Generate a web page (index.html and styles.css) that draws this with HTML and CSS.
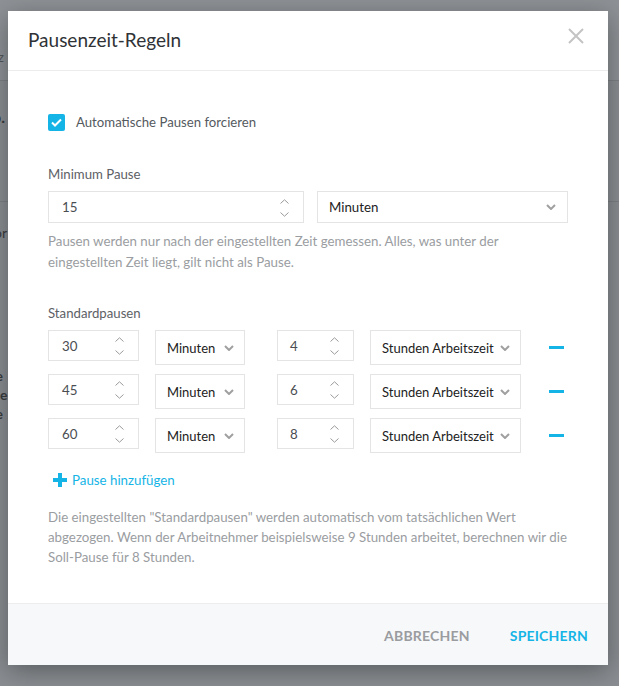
FILE: index.html
```html
<!DOCTYPE html>
<html lang="de">

<head>
  <meta charset="UTF-8" />
  <meta name="viewport" content="width=device-width, initial-scale=1.0" />
  <title>Pausenzeit-Regeln</title>
  <link rel="stylesheet" href="styles.css">
</head>

<body>
  <div class="page">
    <div class="page-top"><span class="page-frag frag-top">z</span></div>
    <div class="page-band">
      <span class="page-frag frag-bold">o.</span>
    </div>
    <div class="page-rest">
      <span class="page-frag frag-or">or</span>
      <div class="frag-list">
        <span class="page-frag frag-bold">le</span>
        <span class="page-frag frag-bold">de</span>
        <span class="page-frag frag-bold">le</span>
      </div>
    </div>
  </div>

  <div class="modal">
    <div class="modal-header">
      <h2>Pausenzeit-Regeln</h2>
      <svg class="close" width="16" height="16" viewBox="0 0 16 16">
        <path d="M1 1 L15 15 M15 1 L1 15" stroke="#c4c4c4" stroke-width="2" fill="none" />
      </svg>
    </div>

    <div class="modal-body">
      <label class="check">
        <span class="box">
          <svg width="11" height="9" viewBox="0 0 11 9">
            <path d="M1 4.5 L4 7.5 L10 1.5" stroke="#fff" stroke-width="2" fill="none" />
          </svg>
        </span>
        Automatische Pausen forcieren
      </label>

      <div class="field-label">Minimum Pause</div>
      <div class="min-row">
        <div class="num wide">
          <span>15</span>
          <span class="stepper">
            <svg width="9" height="5" viewBox="0 0 9 5"><path d="M0.5 4.5 L4.5 0.8 L8.5 4.5" stroke="#9a9a9a" fill="none" /></svg>
            <svg width="9" height="5" viewBox="0 0 9 5"><path d="M0.5 0.5 L4.5 4.2 L8.5 0.5" stroke="#9a9a9a" fill="none" /></svg>
          </span>
        </div>
        <div class="sel wide">
          <span>Minuten</span>
          <svg class="caret" width="10" height="6" viewBox="0 0 10 6"><path d="M1 1 L5 5 L9 1" stroke="#a0a0a0" stroke-width="2" fill="none" /></svg>
        </div>
      </div>
      <p class="help">Pausen werden nur nach der eingestellten Zeit gemessen. Alles, was unter der eingestellten Zeit liegt, gilt nicht als Pause.</p>

      <div class="field-label std">Standardpausen</div>
      <div class="rows">
        <div class="break-row">
          <div class="num n1"><span>30</span><span class="stepper"><svg width="9" height="5" viewBox="0 0 9 5"><path d="M0.5 4.5 L4.5 0.8 L8.5 4.5" stroke="#9a9a9a" fill="none" /></svg><svg width="9" height="5" viewBox="0 0 9 5"><path d="M0.5 0.5 L4.5 4.2 L8.5 0.5" stroke="#9a9a9a" fill="none" /></svg></span></div>
          <div class="sel s1"><span>Minuten</span><svg class="caret" width="10" height="6" viewBox="0 0 10 6"><path d="M1 1 L5 5 L9 1" stroke="#a0a0a0" stroke-width="2" fill="none" /></svg></div>
          <div class="num n2"><span>4</span><span class="stepper"><svg width="9" height="5" viewBox="0 0 9 5"><path d="M0.5 4.5 L4.5 0.8 L8.5 4.5" stroke="#9a9a9a" fill="none" /></svg><svg width="9" height="5" viewBox="0 0 9 5"><path d="M0.5 0.5 L4.5 4.2 L8.5 0.5" stroke="#9a9a9a" fill="none" /></svg></span></div>
          <div class="sel s2"><span>Stunden Arbeitszeit</span><svg class="caret" width="10" height="6" viewBox="0 0 10 6"><path d="M1 1 L5 5 L9 1" stroke="#a0a0a0" stroke-width="2" fill="none" /></svg></div>
          <span class="minus"></span>
        </div>
        <div class="break-row">
          <div class="num n1"><span>45</span><span class="stepper"><svg width="9" height="5" viewBox="0 0 9 5"><path d="M0.5 4.5 L4.5 0.8 L8.5 4.5" stroke="#9a9a9a" fill="none" /></svg><svg width="9" height="5" viewBox="0 0 9 5"><path d="M0.5 0.5 L4.5 4.2 L8.5 0.5" stroke="#9a9a9a" fill="none" /></svg></span></div>
          <div class="sel s1"><span>Minuten</span><svg class="caret" width="10" height="6" viewBox="0 0 10 6"><path d="M1 1 L5 5 L9 1" stroke="#a0a0a0" stroke-width="2" fill="none" /></svg></div>
          <div class="num n2"><span>6</span><span class="stepper"><svg width="9" height="5" viewBox="0 0 9 5"><path d="M0.5 4.5 L4.5 0.8 L8.5 4.5" stroke="#9a9a9a" fill="none" /></svg><svg width="9" height="5" viewBox="0 0 9 5"><path d="M0.5 0.5 L4.5 4.2 L8.5 0.5" stroke="#9a9a9a" fill="none" /></svg></span></div>
          <div class="sel s2"><span>Stunden Arbeitszeit</span><svg class="caret" width="10" height="6" viewBox="0 0 10 6"><path d="M1 1 L5 5 L9 1" stroke="#a0a0a0" stroke-width="2" fill="none" /></svg></div>
          <span class="minus"></span>
        </div>
        <div class="break-row">
          <div class="num n1"><span>60</span><span class="stepper"><svg width="9" height="5" viewBox="0 0 9 5"><path d="M0.5 4.5 L4.5 0.8 L8.5 4.5" stroke="#9a9a9a" fill="none" /></svg><svg width="9" height="5" viewBox="0 0 9 5"><path d="M0.5 0.5 L4.5 4.2 L8.5 0.5" stroke="#9a9a9a" fill="none" /></svg></span></div>
          <div class="sel s1"><span>Minuten</span><svg class="caret" width="10" height="6" viewBox="0 0 10 6"><path d="M1 1 L5 5 L9 1" stroke="#a0a0a0" stroke-width="2" fill="none" /></svg></div>
          <div class="num n2"><span>8</span><span class="stepper"><svg width="9" height="5" viewBox="0 0 9 5"><path d="M0.5 4.5 L4.5 0.8 L8.5 4.5" stroke="#9a9a9a" fill="none" /></svg><svg width="9" height="5" viewBox="0 0 9 5"><path d="M0.5 0.5 L4.5 4.2 L8.5 0.5" stroke="#9a9a9a" fill="none" /></svg></span></div>
          <div class="sel s2"><span>Stunden Arbeitszeit</span><svg class="caret" width="10" height="6" viewBox="0 0 10 6"><path d="M1 1 L5 5 L9 1" stroke="#a0a0a0" stroke-width="2" fill="none" /></svg></div>
          <span class="minus"></span>
        </div>
      </div>

      <a class="add" href="#">
        <svg width="14" height="14" viewBox="0 0 14 14"><path d="M7 0 V14 M0 7 H14" stroke="#14b4e6" stroke-width="4" /></svg>
        Pause hinzufügen
      </a>

      <p class="help desc">Die eingestellten "Standardpausen" werden automatisch vom tatsächlichen Wert abgezogen. Wenn der Arbeitnehmer beispielsweise 9 Stunden arbeitet, berechnen wir die Soll-Pause für 8 Stunden.</p>
    </div>

    <div class="modal-footer">
      <button class="btn cancel">ABBRECHEN</button>
      <button class="btn save">SPEICHERN</button>
    </div>
  </div>
</body>

</html>
```

FILE: styles.css
```css
* {
  box-sizing: border-box;
  margin: 0;
  padding: 0;
  font-family: 'Lato', 'Liberation Sans', sans-serif;
}

body {
  background: #8a8e92;
  min-height: 686px;
  overflow: hidden;
}

/* dimmed page behind the dialog */
.page {
  height: 686px;
}

.page-top {
  height: 81px;
  background: #8e9296;
  border-bottom: 1px solid #7d8185;
  padding-top: 49px;
}

.page-band {
  height: 121px;
  border-bottom: 1px solid #7d8185;
  padding-top: 26px;
}

.page-rest {
  padding-top: 22px;
}

.page-frag {
  display: block;
  color: #3a3d40;
  font-size: 14px;
  margin-left: -6px;
}

.frag-top {
  color: #55595c;
  font-size: 13px;
  margin-left: -2px;
}

.frag-bold {
  font-weight: 700;
  font-size: 16px;
  margin-left: -8px;
}

.frag-list {
  margin-top: 125px;
  line-height: 19px;
}

.frag-list .page-frag {
  font-size: 14px;
}

/* dialog */
.modal {
  position: absolute;
  left: 8px;
  top: 11px;
  width: 600px;
  background: #fff;
  box-shadow: 0 6px 24px rgba(0, 0, 0, 0.35);
}

.modal-header {
  height: 60px;
  border-bottom: 1px solid #ececec;
  display: flex;
  align-items: center;
  justify-content: space-between;
  padding: 0 24px 0 20px;
}

.modal-header h2 {
  font-size: 19px;
  font-weight: 400;
  color: #2f3236;
  margin-top: -2px;
}

.close {
  margin-top: -10px;
}

.modal-body {
  padding: 42px 40px 36px;
}

.check {
  display: flex;
  align-items: center;
  gap: 11px;
  font-size: 13.2px;
  color: #555a5f;
  height: 18px;
}

.box {
  width: 17px;
  height: 17px;
  border-radius: 2px;
  background: #14b4e6;
  display: flex;
  align-items: center;
  justify-content: center;
}

.field-label {
  margin-top: 33px;
  font-size: 13.2px;
  line-height: 20px;
  color: #5d6166;
}

.min-row {
  display: flex;
  gap: 13px;
  margin-top: 7px;
}

.num,
.sel {
  border: 1px solid #e4e4e4;
  display: flex;
  align-items: center;
  justify-content: space-between;
  font-size: 13.3px;
  white-space: nowrap;
}

.num {
  color: #4a4d52;
  height: 31px;
  padding: 0 14px 0 13px;
}

.sel {
  color: #222;
  height: 35px;
  padding: 0 10px 0 11px;
}

.num.wide,
.sel.wide {
  height: 32px;
}

.num.wide {
  width: 256px;
}

.sel.wide {
  width: 251px;
  padding-right: 11px;
}

.stepper {
  display: flex;
  flex-direction: column;
  gap: 8px;
  margin-top: 1px;
}

.help {
  margin-top: 8px;
  font-size: 13.3px;
  line-height: 21px;
  color: #9a9da1;
}

.field-label.std {
  margin-top: 30px;
}

.rows {
  margin-top: 7px;
  display: flex;
  flex-direction: column;
  gap: 9px;
}

.break-row {
  display: flex;
  align-items: flex-start;
}

.n1 {
  width: 91px;
}

.s1 {
  width: 90px;
  margin-left: 16px;
  font-size: 13px;
}

.n2 {
  width: 77px;
  margin-left: 32px;
  padding-left: 12px;
}

.s2 {
  width: 151px;
  margin-left: 16px;
  padding-right: 10px;
  font-size: 13px;
}

.minus {
  width: 15px;
  height: 3px;
  background: #14b4e6;
  margin: 16px 0 0 28px;
}

.add {
  display: flex;
  align-items: center;
  gap: 5px;
  margin: 17px 0 0 5px;
  font-size: 13.3px;
  color: #14b4e6;
  text-decoration: none;
  height: 20px;
}

.desc {
  margin-top: 17px;
  line-height: 20px;
}

.modal-footer {
  height: 62px;
  background: #f7f8fa;
  border-top: 1px solid #ededed;
  display: flex;
  justify-content: flex-end;
  align-items: center;
  gap: 40px;
  padding: 2px 20px 0 0;
}

.btn {
  background: none;
  border: none;
  font-size: 14px;
  font-weight: 700;
  letter-spacing: 0.2px;
  cursor: pointer;
}

.cancel {
  color: #9a9ca0;
}

.save {
  color: #14b4e6;
}
```
